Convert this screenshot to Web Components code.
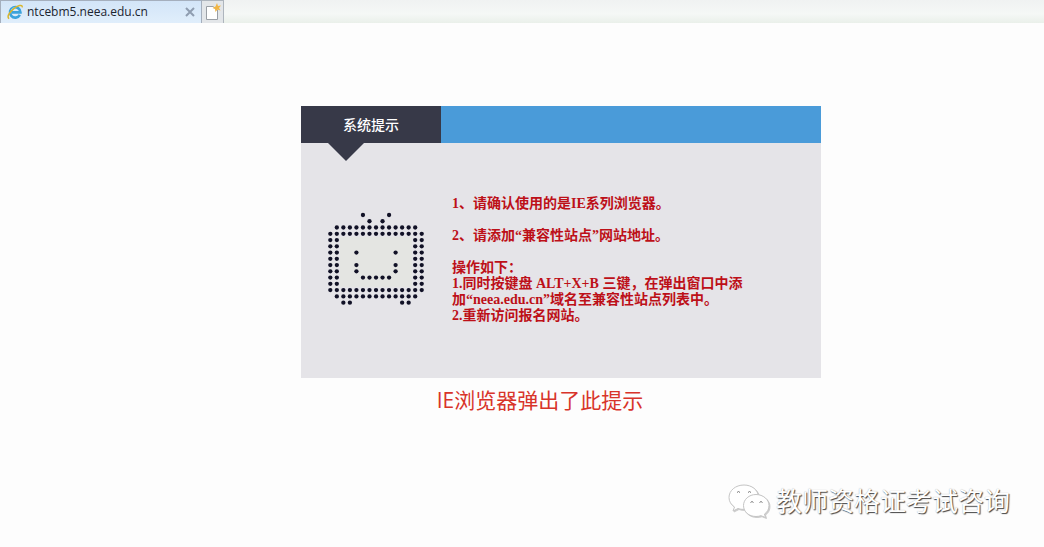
<!DOCTYPE html>
<html lang="zh-CN">
<head>
    <meta charset="UTF-8">
    <meta name="viewport" content="width=device-width, initial-scale=1.0">
    <title>系统提示</title>
    <style>
        body{
            margin:0;
            min-height:100vh;
            display:flex;
            flex-direction:column;
            background:#fdfdfd;
            font-family:"Open Sans","Noto Sans CJK SC",sans-serif;
        }
        main{
            flex:1;
            display:flex;
            flex-direction:column;
            align-items:center;
            padding:83px 0 28px 78px;
        }
        .caption{
            margin:7px 42px 0 0;
            color:#d8342a;
            font-size:21px;
            line-height:30px;
        }
        account-mark{
            margin:auto 34px 0 0;
            align-self:flex-end;
        }
        p{
            margin:0 0 16px;
        }
    </style>
</head>
<body>
    <browser-tabs>ntcebm5.neea.edu.cn</browser-tabs>
    <main>
        <notice-panel>
            <span slot="title">系统提示</span>
            <p>1、请确认使用的是IE系列浏览器。</p>
            <p>2、请添加“兼容性站点”网站地址。</p>
            <div>操作如下：</div>
            <div>1.同时按键盘 ALT+X+B 三键，在弹出窗口中添加“neea.edu.cn”域名至兼容性站点列表中。</div>
            <div>2.重新访问报名网站。</div>
        </notice-panel>
        <div class="caption">IE浏览器弹出了此提示</div>
        <account-mark>教师资格证考试咨询</account-mark>
    </main>

    <template id="browserTabs">
        <style>
            :host{
                display:flex;
                height:23px;
                background:linear-gradient(#f0f2f2,#f5f8f6 60%,#eaf0ea);
            }
            .tab{
                box-sizing:border-box;
                width:202px;
                display:flex;
                align-items:center;
                gap:4px;
                padding:0 4px 0 6px;
                border:1px solid #a5afbd;
                border-width:1px 1px 0;
                background:linear-gradient(#d3e5f8,#e0eefb);
                color:#1b2430;
                font-size:12px;
                line-height:20px;
            }
            .name{
                flex:1;
            }
            button{
                display:flex;
                align-items:center;
                justify-content:center;
                padding:0;
                border:0;
                background:none;
            }
            .close{
                width:14px;
                height:14px;
            }
            .add{
                box-sizing:border-box;
                width:22px;
                border:1px solid #aeb5bd;
                border-width:1px 1px 0 0;
                background:#e3e6e9;
            }
            svg{
                display:block;
            }
        </style>
        <div class="tab">
            <svg width="16" height="16" viewBox="0 0 16 16" fill="none">
                <path d="M12.8 10.8A5.2 5.2 0 1 1 13.4 8.3H4.6" stroke="#3ba3dc" stroke-width="2.7"/>
                <path d="M4 6.2A4.6 4.6 0 0 1 8 3.6" stroke="#92d5f4" stroke-width="1"/>
                <path d="M2.2 14.6C-.5 13.5 2 8.5 6.5 4.8C10.5 1.5 15.6-.2 15.2 3.4" stroke="#d9b52c" stroke-width="1.5"/>
            </svg>
            <span class="name"><slot></slot></span>
            <button class="close" aria-label="关闭选项卡">
                <svg width="10" height="10" viewBox="0 0 10 10"><path d="M1 1L9 9M9 1L1 9" stroke="#8f9db0" stroke-width="2"/></svg>
            </button>
        </div>
        <button class="add" aria-label="新建选项卡">
            <svg width="16" height="18" viewBox="0 0 16 18">
                <path d="M1.5 3.5H8L12.5 7V16.5H1.5Z" fill="#fff" stroke="#9a9fa5"/>
                <path d="M12 0L13 3L16 2.5L14 5L15.5 7.5L12.5 6.5L10.5 9L10 6L7.5 5L10.5 3.5Z" fill="#f0b545"/>
            </svg>
        </button>
    </template>

    <template id="noticePanel">
        <style>
            :host{
                display:block;
                width:100%;
                max-width:520px;
                background:#e5e4e8;
            }
            header{
                display:flex;
                background:#4a9bd9;
            }
            h1{
                position:relative;
                width:140px;
                margin:0;
                background:#373948;
                color:#fff;
                font-size:14px;
                font-weight:500;
                line-height:37px;
                text-align:center;
            }
            h1::after{
                content:"";
                position:absolute;
                top:100%;
                left:27px;
                border:18px solid transparent;
                border-top-color:#373948;
                border-bottom:0;
            }
            .content{
                display:flex;
                align-items:flex-start;
                gap:27px;
                padding:53px 68px 54px 26px;
            }
            dot-tv{
                flex:none;
                margin-top:16px;
            }
            .text{
                flex:1;
                color:#bd1018;
                font:bold 14px/16px "Liberation Serif","Noto Sans CJK SC",serif;
            }
        </style>
        <header><h1><slot name="title"></slot></h1></header>
        <div class="content">
            <dot-tv></dot-tv>
            <div class="text"><slot></slot></div>
        </div>
    </template>

    <template id="accountMark">
        <style>
            :host{
                display:flex;
                align-items:center;
                gap:6px;
                color:#fff;
                font-size:26px;
                line-height:36px;
                text-shadow:1px 1px 1px #444,0 0 1px #aaa;
            }
            svg{
                filter:drop-shadow(1px 1px 0 #ccc);
            }
        </style>
        <svg width="42" height="34" viewBox="0 0 42 34" fill="#fff" stroke="#c4c4c4" stroke-width="1">
            <path d="M16 1C7.5 1 1 6.5 1 13.5C1 17.5 3 20.5 6.5 23L5 27L10 24.5C13 25.5 15 25.5 17.5 25.2C27 25 31 19 30.5 12.5C30 6 24 1 16 1Z"/>
            <path d="M28 10.5C21 10.5 15.5 15.5 15.5 21.5C15.5 28 21 32.5 28 32.5C30 32.5 31.5 32.2 33 31.7L37.5 33.5L36.5 30C39.5 28 41 25 41 21.5C41 15.5 35 10.5 28 10.5Z"/>
            <g fill="none" stroke="#777">
                <path d="M9 8.5Q10.5 6.5 12 8.5M20 8.5Q21.5 6.5 23 8.5M22.5 18.5Q24 16.5 25.5 18.5M31.5 18.5Q33 16.5 34.5 18.5"/>
            </g>
        </svg>
        <span><slot></slot></span>
    </template>
</body>
<script>
    function attach(el,id){
        const shadow = el.attachShadow({mode:'open'});
        shadow.appendChild(document.getElementById(id).content.cloneNode(true));
    }
    // television drawn as a dot matrix
    const TV = [
        '.....o...o.....',
        '......o.o......',
        '.ooooooooooooo.',
        'ooooooooooooooo',
        'oo...........oo',
        'oo...........oo',
        'oo..o.....o..oo',
        'oo...........oo',
        'oo..o.....o..oo',
        'oo..o.....o..oo',
        'oo...ooooo...oo',
        'oo...........oo',
        'ooooooooooooooo',
        '.ooooooooooooo.',
        '..oo.......oo..'
    ];
    class DotTv extends HTMLElement{
        constructor(){
            super();
            const shadow = this.attachShadow({mode:'open'});
            let dots = '';
            TV.forEach((row,y)=>{
                [...row].forEach((c,x)=>{
                    if(c === 'o'){
                        dots += `<circle cx="${3.3 + x * 6.53}" cy="${3 + y * 6.26}" r="2.15"/>`;
                    }
                });
            });
            shadow.innerHTML = `
                <style>
                    :host{ display:block; }
                    svg{ display:block; }
                </style>
                <svg width="98" height="94" viewBox="0 0 98 94" fill="#111126">
                    <rect x="13" y="25" width="72" height="50" fill="#e4e5e2"/>
                    ${dots}
                </svg>
            `;
        }
    }
    class BrowserTabs extends HTMLElement{
        constructor(){
            super();
            attach(this,'browserTabs');
        }
    }
    class NoticePanel extends HTMLElement{
        constructor(){
            super();
            attach(this,'noticePanel');
        }
    }
    class AccountMark extends HTMLElement{
        constructor(){
            super();
            attach(this,'accountMark');
        }
    }
    customElements.define('dot-tv',DotTv);
    customElements.define('browser-tabs',BrowserTabs);
    customElements.define('notice-panel',NoticePanel);
    customElements.define('account-mark',AccountMark);
</script>
</html>
